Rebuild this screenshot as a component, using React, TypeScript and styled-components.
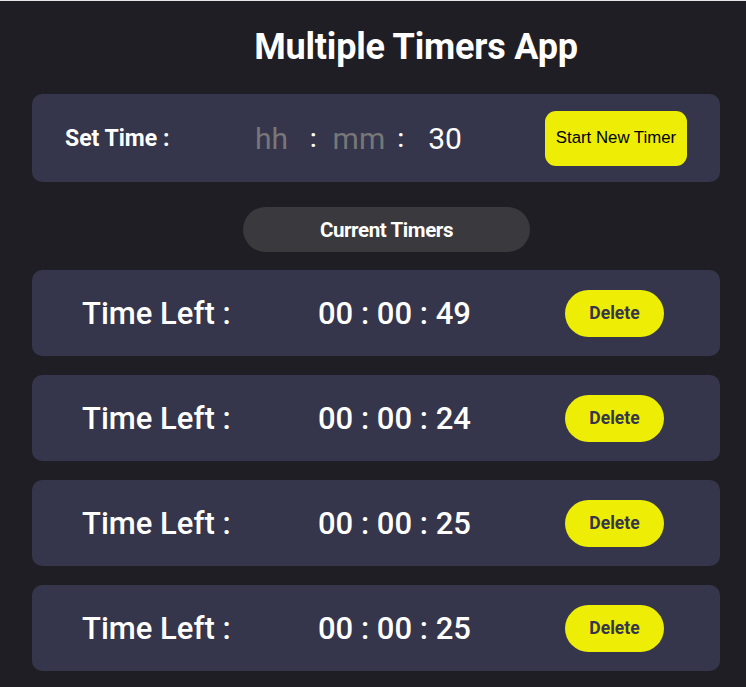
import React, { useState } from "react"
import styled, { createGlobalStyle } from "styled-components"

const GlobalStyle = createGlobalStyle`
  html, body {
    margin: 0;
    padding: 0;
    background: #1f1e24;
  }
  body {
    border-top: 1px solid #e6e6e6;
    font-family: Roboto, "Liberation Sans", sans-serif;
  }
  * {
    box-sizing: border-box;
  }
`

const Page = styled.div`
  min-height: 686px;
  padding: 0 26px 16px 32px;
  display: flex;
  flex-direction: column;
`

const Title = styled.h1`
  margin: 24px 0 0;
  padding-left: 80px;
  text-align: center;
  color: #fff;
  font-size: 36px;
  font-weight: 700;
  line-height: 44px;
  letter-spacing: -0.2px;
`

const Card = styled.div`
  background: #35354b;
  border-radius: 10px;
  display: flex;
  align-items: center;
`

const SetCard = styled(Card)`
  margin-top: 25px;
  height: 88px;
  padding: 0 33px;
`

const SetLabel = styled.span`
  color: #fff;
  font-size: 23px;
  font-weight: 700;
  width: 190px;
`

const Inputs = styled.div`
  display: flex;
  align-items: center;
  flex: 1;
  font-size: 30px;
  color: #fff;
`

const Field = styled.input<{ $w: number }>`
  width: ${(p) => p.$w}px;
  background: transparent;
  border: none;
  outline: none;
  color: #fff;
  font: inherit;
  padding: 0;
  &::placeholder {
    color: #777;
  }
`

const Colon = styled.span<{ $l: number; $r: number }>`
  font-size: 25px;
  font-weight: 500;
  margin: 0 ${(p) => p.$r}px 0 ${(p) => p.$l}px;
`

const StartButton = styled.button`
  width: 142px;
  height: 55px;
  border: none;
  border-radius: 11px;
  background: #eded05;
  color: #000;
  font-family: "Liberation Sans", Arial, sans-serif;
  font-size: 16.8px;
  padding: 0;
  cursor: pointer;
`

const PillRow = styled.div`
  display: flex;
  justify-content: center;
  margin: 25px 0 18px;
  padding-left: 21px;
`

const Pill = styled.div`
  width: 287px;
  height: 45px;
  border-radius: 23px;
  background: #3a393e;
  color: #fff;
  font-size: 20.5px;
  font-weight: 700;
  letter-spacing: -0.4px;
  display: flex;
  align-items: center;
  justify-content: center;
`

const List = styled.div`
  display: flex;
  flex-direction: column;
  gap: 19px;
`

const TimerCard = styled(Card)`
  height: 86px;
  padding: 0 56px 0 50px;
  color: #fff;
`

const TimeLabel = styled.span`
  font-size: 31px;
  font-weight: 500;
  width: 236px;
`

const Remaining = styled.span`
  font-size: 31px;
  font-weight: 500;
  flex: 1;
`

const DeleteButton = styled.button`
  width: 99px;
  height: 47px;
  border: none;
  border-radius: 24px;
  background: #eded05;
  color: #35354b;
  font-family: Roboto, "Liberation Sans", sans-serif;
  font-size: 17.5px;
  font-weight: 700;
  padding: 0;
  cursor: pointer;
`

const pad = (n: number) => String(n).padStart(2, "0")

const App = () => {
  const [timers, setTimers] = useState([49, 24, 25, 25])
  return (
    <Page>
      <GlobalStyle />
      <Title>Multiple Timers App</Title>
      <SetCard>
        <SetLabel>Set Time :</SetLabel>
        <Inputs>
          <Field $w={34} placeholder="hh" />
          <Colon $l={21} $r={16}>:</Colon>
          <Field $w={52} placeholder="mm" />
          <Colon $l={13} $r={24}>:</Colon>
          <Field $w={60} placeholder="ss" defaultValue="30" />
        </Inputs>
        <StartButton>Start New Timer</StartButton>
      </SetCard>
      <PillRow>
        <Pill>Current Timers</Pill>
      </PillRow>
      <List>
        {timers.map((t, i) => (
          <TimerCard key={i}>
            <TimeLabel>Time Left :</TimeLabel>
            <Remaining>
              00 : {pad(Math.floor(t / 60))} : {pad(t % 60)}
            </Remaining>
            <DeleteButton onClick={() => setTimers(timers.filter((_, j) => j !== i))}>Delete</DeleteButton>
          </TimerCard>
        ))}
      </List>
    </Page>
  )
}

export default App
